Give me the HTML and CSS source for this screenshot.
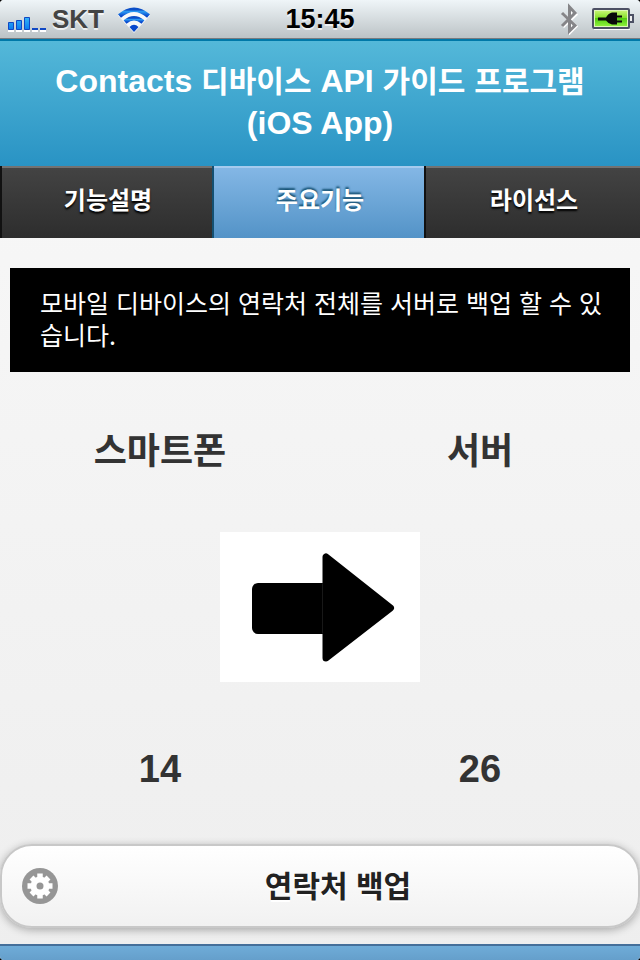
FILE: index.html
```html
<!DOCTYPE html>
<html lang="ko">
<head>
<meta charset="utf-8">
<meta name="viewport" content="width=device-width, initial-scale=1">
<title>Contacts 디바이스 API 가이드 프로그램</title>
<link rel="stylesheet" href="styles.css">
</head>
<body>
<div class="status">
  <div class="status-side">
    <svg class="signal" width="38" height="20" viewBox="0 0 38 20" aria-hidden="true">
      <defs>
        <linearGradient id="bar" x1="0" y1="0" x2="0" y2="1"><stop offset="0" stop-color="#35b4f8"/><stop offset="1" stop-color="#0a7cf0"/></linearGradient>
      </defs>
      <path d="M0 18h6M8 18h6M16 18h6M24 18h6M32 18h6" stroke="#fff" stroke-width="2"/>
      <g fill="url(#bar)" stroke="#1048c4">
        <path d="M.5 9.500h5v7h-5zM8.500 7.500h5v9h-5zM16.500 4.500h5v12h-5z"/>
      </g>
      <path d="M24 16h6M32 16h6" stroke="#1048c4" stroke-width="2"/>
    </svg>
    <span class="carrier">SKT</span>
    <svg class="wifi" width="34" height="26" viewBox="0 0 34 26" aria-hidden="true">
      <defs>
        <linearGradient id="wave" x1="0" y1="0" x2="0" y2="1"><stop offset="0" stop-color="#0b4fc8"/><stop offset=".3" stop-color="#2c9cf4"/><stop offset="1" stop-color="#0848cc"/></linearGradient>
      </defs>
      <path d="M1 8.500Q17-6 33 8.500L17 26z" fill="#fff" opacity=".8"/>
      <g fill="none" stroke="url(#wave)" stroke-width="4.500">
        <path d="M2.500 9Q17-3.500 31.500 9"/>
        <path d="M8 15Q17 7.500 26 15"/>
      </g>
      <path d="M12.500 20Q17 15.500 21.500 20L17 25z" fill="#0848cc"/>
    </svg>
  </div>
  <span class="clock">15:45</span>
  <div class="status-side status-right">
    <svg width="18" height="32" viewBox="0 0 18 32" aria-hidden="true">
      <path d="M2 10L15 22.500 9.500 28V5L15 10.500 2 23" fill="none" stroke="#fff" stroke-width="3" transform="translate(1 1)"/>
      <path d="M2 10L15 22.500 9.500 28V4L15 10 2 23" fill="none" stroke="#858588" stroke-width="3"/>
    </svg>
    <svg class="battery" width="42" height="22" viewBox="0 0 42 22" aria-hidden="true">
      <defs>
        <linearGradient id="cell" x1="0" y1="0" x2="0" y2="1"><stop offset="0" stop-color="#c4f470"/><stop offset=".45" stop-color="#86e02c"/><stop offset=".5" stop-color="#52cc10"/><stop offset="1" stop-color="#8cf03c"/></linearGradient>
      </defs>
      <path d="M2 21.500h36" stroke="#fff"/>
      <rect x="1" y="1" width="36" height="19" rx="1" fill="#dff8b8" stroke="#4c5064" stroke-width="2"/>
      <rect x="3" y="3" width="32" height="15" fill="url(#cell)"/>
      <path d="M38 7h3v7h-3" fill="#eee" stroke="#4c5064" stroke-width="2"/>
      <path d="M6 9.500h8q2-4 6-5h5v3h5v2h-5v3h5v2h-5v2h-5q-4-1-6-4H6z" fill="#0a0a0a"/>
    </svg>
  </div>
</div>

<header class="title">
  <h1>Contacts <span class="ko">디바이스</span> API <span class="ko">가이드</span> <span class="ko">프로그램</span><br>(iOS App)</h1>
</header>

<nav class="tabs">
  <a href="#info">기능설명</a>
  <a href="#main" class="active" aria-current="page">주요기능</a>
  <a href="#license">라이선스</a>
</nav>

<main id="main">
  <p class="notice">모바일 디바이스의 연락처 전체를 서버로 백업 할 수 있습니다.</p>
  <div class="pair">
    <h2>스마트폰</h2>
    <h2>서버</h2>
  </div>
  <svg class="arrow" width="200" height="150" viewBox="0 0 200 150" role="img" aria-label="스마트폰에서 서버로">
    <rect width="200" height="150" fill="#fff"/>
    <rect x="32" y="51" width="76" height="51" rx="6"/>
    <path d="M106 25V126L170.500 76z" stroke="#000" stroke-width="7" stroke-linejoin="round"/>
    <path d="M102.500 52v49" stroke="#181818"/>
  </svg>
  <div class="pair counts">
    <strong>14</strong>
    <strong>26</strong>
  </div>
  <button class="backup" type="button">
    <svg width="36" height="36" viewBox="0 0 36 36" aria-hidden="true">
      <circle cx="18" cy="18" r="18" fill="#969696"/>
      <circle cx="18" cy="18" r="9.500" fill="#fff"/>
      <path d="M18 5.500v25M5.500 18h25M9.500 9.500l17 17M26.500 9.500l-17 17" stroke="#fff" stroke-width="5.500"/>
      <circle cx="18" cy="18" r="3.500" fill="#969696"/>
    </svg>
    <span>연락처 백업</span>
  </button>
</main>
<footer class="foot"></footer>
</body>
</html>
```
FILE: styles.css
```css
* {
  box-sizing: border-box;
}

html {
  background: #000;
}

body {
  margin: 0;
  min-height: 100vh;
  display: flex;
  flex-direction: column;
  overflow: hidden;
  border-radius: 4px;
  background: linear-gradient(#f9f9f9, #eee);
  color: #333;
  font-family: "Liberation Sans", "Noto Sans CJK KR", sans-serif;
}

.status {
  display: grid;
  grid-template-columns: 1fr auto 1fr;
  align-items: center;
  height: 39px;
  padding: 0 6px;
  border-bottom: 1px solid #777b80;
  background: linear-gradient(#eff5f8, #bcc3c6);
  font-size: 26px;
  font-weight: bold;
  line-height: 38px;
  text-shadow: 0 2px 0 rgba(255, 255, 255, .7);
}

.status-side {
  display: flex;
  align-items: center;
}

.signal {
  margin: 7px 0 0 2px;
}

.carrier {
  margin: 0 13px 0 6px;
  color: #444;
}

.wifi {
  margin-top: 2px;
}

.clock {
  color: #000;
  font-size: 27px;
}

.status-right {
  justify-content: flex-end;
  gap: 14px;
}

.title {
  padding: 19px 16px 22px;
  border-top: 2px solid #0078a8;
  background: linear-gradient(#54b8d9, #2993c4);
  color: #fff;
  text-align: center;
}

.title h1 {
  margin: 0;
  font-size: 32px;
  line-height: 42px;
}

.ko {
  font-size: 30px;
  line-height: 30px;
}

.tabs {
  display: grid;
  grid-template-columns: 53fr 53fr 54fr;
}

.tabs a {
  padding: 15px 6px 21px 8px;
  border-left: 2px solid #111;
  box-shadow: inset 0 2px 0 #727272;
  background: linear-gradient(#444, #2d2d2d);
  color: #fff;
  font-family: "Noto Sans CJK KR", sans-serif;
  font-size: 24px;
  font-weight: bold;
  line-height: 36px;
  text-align: center;
  text-decoration: none;
  text-shadow: 0 2px 2px #000;
}

.tabs .active {
  border-left-color: #145072;
  box-shadow: inset 0 2px 0 #a6cbee;
  background: linear-gradient(#85b8e6, #5393c7);
  text-shadow: 0 -2px 2px #145072;
}

main {
  flex: 1;
  display: flex;
  flex-direction: column;
  padding: 30px 0 16px;
}

.notice {
  margin: 0 10px;
  padding: 18px 20px 22px 30px;
  background: #000;
  color: #fff;
  font-family: "Noto Sans CJK KR", sans-serif;
  font-size: 25px;
  line-height: 32px;
}

.pair {
  display: grid;
  grid-template-columns: 1fr 1fr;
  margin-top: 57px;
  text-align: center;
  font-size: 38px;
  line-height: 46px;
}

.pair h2 {
  margin: 0;
  font-size: 36px;
}

.arrow {
  align-self: center;
  margin-top: 57px;
}

.counts {
  margin-top: 64px;
}

.backup {
  display: grid;
  grid-template-columns: 36px 1fr;
  align-items: center;
  width: 100%;
  margin-top: auto;
  padding: 18px 20px;
  border: 2px solid #c8c8c8;
  border-radius: 32px;
  background: linear-gradient(#fff, #f1f1f1);
  box-shadow: 0 2px 8px rgba(0, 0, 0, .3);
  color: #222;
  font-family: "Noto Sans CJK KR", sans-serif;
  font-size: 30px;
  font-weight: bold;
  line-height: 40px;
  text-shadow: 0 2px 0 #fff;
}

.backup span {
  padding-bottom: 4px;
}

.foot {
  height: 16px;
  border-top: 2px solid #456f9a;
  background: linear-gradient(#6facd8, #659fcb);
}
```
